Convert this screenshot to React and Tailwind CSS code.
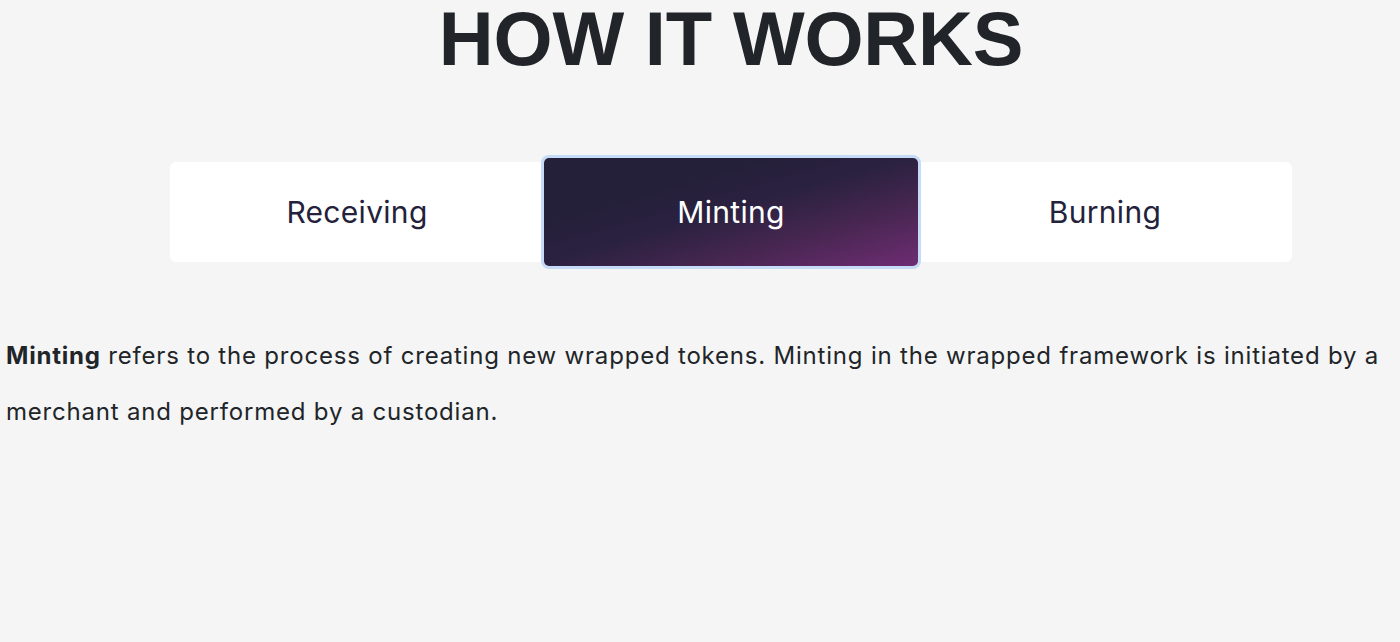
import React from 'react';

const tabs = [
  { id: 'receiving', label: 'Receiving' },
  { id: 'minting', label: 'Minting' },
  { id: 'burning', label: 'Burning' },
];

export default function App() {
  const [active, setActive] = React.useState('minting');

  return (
    <div className="min-h-[642px] bg-[#f5f5f5] text-[#212529]">
      <h1 className="ml-[170px] w-[1122px] pt-[1px] text-center font-['Liberation_Sans',Arial,sans-serif] text-[76px] font-bold leading-none tracking-[-0.2px] text-[#212529]">
        HOW IT WORKS
      </h1>

      {/* tabs */}
      <div className="ml-[170px] mt-[85px] flex h-[100px] w-[1122px] rounded-md bg-white">
        {tabs.map((tab) => {
          const isActive = tab.id === active;
          return (
            <button
              key={tab.id}
              onClick={() => setActive(tab.id)}
              className={
                isActive
                  ? "-my-[4px] flex flex-1 items-center justify-center rounded-[5px] bg-[linear-gradient(to_bottom_right,#25203a_30%,#2a2140_48%,#45264f_70%,#6e2c73)] font-['Inter',sans-serif] text-[30px] tracking-[0.3px] text-white ring-[3px] ring-[#c6dbf7]"
                  : "flex flex-1 items-center justify-center rounded-md font-['Inter',sans-serif] text-[30px] tracking-[0.3px] text-[#24223b]"
              }
            >
              {tab.label}
            </button>
          );
        })}
      </div>

      <p className="mt-[66px] pl-[6px] font-['Inter',sans-serif] text-[24px] leading-[56px] tracking-[0.8px] text-[#212529]">
        <b className="font-bold">Minting</b> refers to the process of creating new wrapped tokens. Minting in the wrapped framework is initiated by a merchant and performed by a custodian.
      </p>
    </div>
  );
}
